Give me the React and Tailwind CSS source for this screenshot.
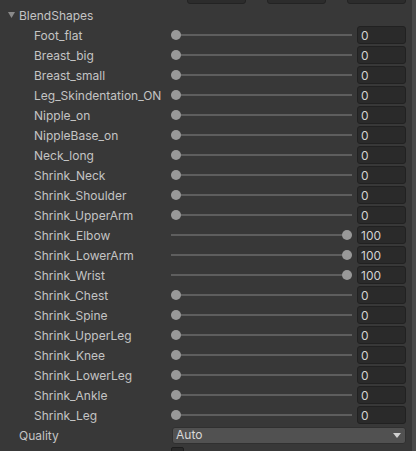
import React from "react";

const shapes = [
  ["Foot_flat", 0],
  ["Breast_big", 0],
  ["Breast_small", 0],
  ["Leg_Skindentation_ON", 0],
  ["Nipple_on", 0],
  ["NippleBase_on", 0],
  ["Neck_long", 0],
  ["Shrink_Neck", 0],
  ["Shrink_Shoulder", 0],
  ["Shrink_UpperArm", 0],
  ["Shrink_Elbow", 100],
  ["Shrink_LowerArm", 100],
  ["Shrink_Wrist", 100],
  ["Shrink_Chest", 0],
  ["Shrink_Spine", 0],
  ["Shrink_UpperLeg", 0],
  ["Shrink_Knee", 0],
  ["Shrink_LowerLeg", 0],
  ["Shrink_Ankle", 0],
  ["Shrink_Leg", 0],
];

function SliderRow({ name, value }) {
  const left = 5 + (value / 100) * 171;
  return (
    <div className="flex h-5 items-center">
      <div className="w-[171px] shrink-0 truncate pl-[34px] pt-[1px]">{name}</div>
      <div className="relative h-5 w-[181px] shrink-0">
        <div className="absolute left-0 right-0 top-[9px] h-[2px] bg-[#5e5e5e]" />
        <div
          className="absolute top-[5px] h-[10px] w-[10px] -translate-x-1/2 rounded-full bg-[#999999]"
          style={{ left }}
        />
      </div>
      <div className="ml-[5px] flex h-[18px] w-[49px] shrink-0 items-center rounded-[3px] border border-[#212121] bg-[#2a2a2a] pl-[3px] pt-[1px] text-[#d2d2d2]">
        {value}
      </div>
    </div>
  );
}

export default function App() {
  return (
    <div
      className="flex h-[451px] w-[416px] overflow-hidden bg-[#383838] text-[12px] text-[#c4c4c4]"
      style={{ fontFamily: "Inter, 'Noto Sans', sans-serif" }}
    >
      <div className="flex w-[412px] flex-col">
        {/* clipped toolbar buttons above */}
        <div className="relative h-[5px] shrink-0">
          <div className="absolute left-[187px] top-[-14px] h-[18px] w-[59px] rounded-[3px] border border-[#232323] bg-[#2c2c2c]" />
          <div className="absolute left-[267px] top-[-14px] h-[18px] w-[59px] rounded-[3px] border border-[#232323] bg-[#2c2c2c]" />
          <div className="absolute left-[347px] top-[-14px] h-[18px] w-[59px] rounded-[3px] border border-[#232323] bg-[#2c2c2c]" />
        </div>

        <div className="flex h-5 shrink-0 items-center pl-[8px]">
          <svg width="7" height="6" viewBox="0 0 7 6" className="mr-[4px]">
            <path d="M0 0 H7 L3.5 6 Z" fill="#8a8a8a" />
          </svg>
          <span className="pt-[1px]">BlendShapes</span>
        </div>

        {shapes.map(([n, v]) => (
          <SliderRow key={n} name={n} value={v} />
        ))}

        <div className="flex h-5 shrink-0 items-center">
          <div className="w-[172px] shrink-0 pl-[19px] pt-[1px]">Quality</div>
          <div className="flex h-[17px] w-[234px] items-center justify-between rounded-[3px] border border-[#303030] bg-[#515151] pl-[3px] pr-[4px] text-[#d8d8d8]">
            <span>Auto</span>
            <svg width="8" height="5" viewBox="0 0 8 5">
              <path d="M0 0 H8 L4 5 Z" fill="#d0d0d0" />
            </svg>
          </div>
        </div>

        <div className="flex shrink-0 items-start pl-[171px] pt-[2px]">
          <div className="h-[14px] w-[13px] shrink-0 rounded-[2px] border border-[#1e1e1e] bg-[#2a2a2a]" />
        </div>
      </div>
      <div className="w-[4px] bg-[#4a4a4a]" />
    </div>
  );
}
